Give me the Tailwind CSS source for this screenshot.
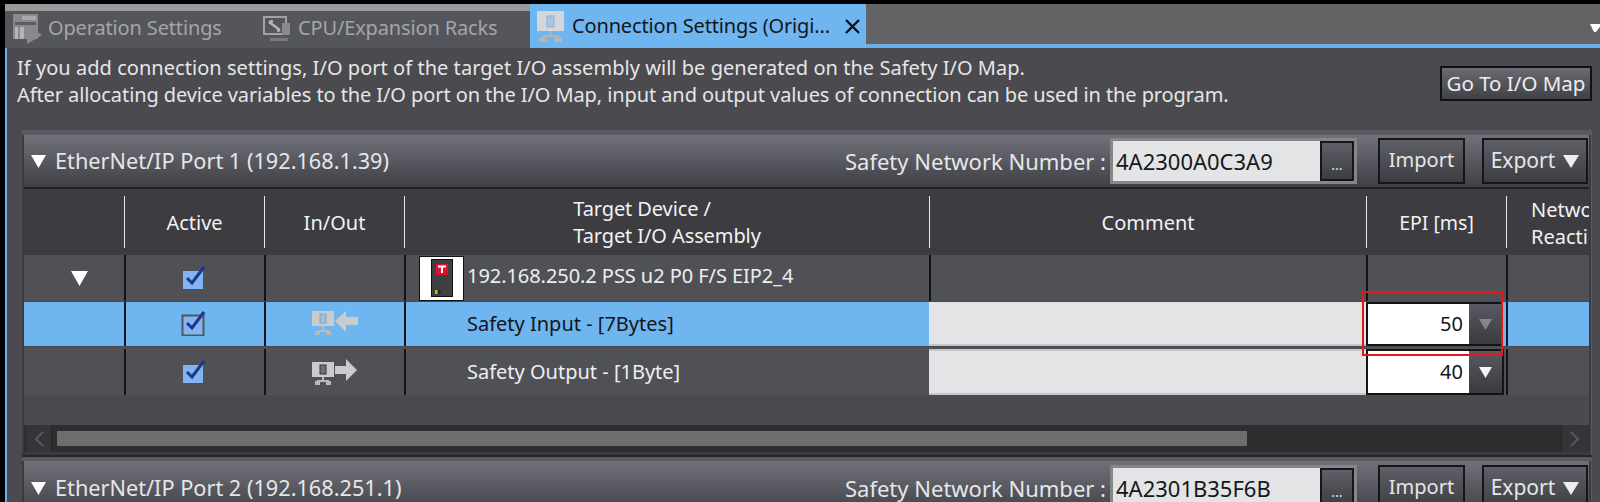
<!DOCTYPE html>
<html>
<head>
<meta charset="utf-8">
<script src="https://cdn.jsdelivr.net/npm/@tailwindcss/browser@4"></script>
</head>
<body class="bg-black">
<div class="relative w-[1600px] h-[502px] overflow-hidden bg-black pl-[5px] pt-[4px] flex font-['Noto_Sans',sans-serif] text-[20px] text-[#e6e6e8]">
  <div class="flex flex-col flex-1 min-w-0">
    <!-- Tabs -->
    <div class="flex h-[44px] shrink-0">
      <div class="w-[525px] flex items-center bg-gradient-to-b from-[#9a9a9c] from-[15%] to-[#55565b] to-[17%] text-[#a4a5a9] tracking-[-0.15px]">
        <svg class="ml-[8px] mt-[5px] w-[29px] h-[30px]" viewBox="0 0 29 30">
          <rect x="0" y="0" width="25" height="25" fill="#8a8a8c"/>
          <rect x="9" y="2" width="14" height="4" fill="#a8a8aa"/>
          <rect x="2" y="8" width="21" height="3" fill="#5c5d61"/>
          <rect x="2" y="13" width="3" height="12" fill="#b5b5b7"/>
          <rect x="7" y="13" width="4" height="12" fill="#b5b5b7"/>
          <path d="M14 11 L29 21 L14 30 Z" fill="#88898b"/>
        </svg>
        <span class="ml-[6px] w-[215px] mt-[3px]">Operation Settings</span>
        <svg class="w-[28px] h-[28px] mt-[6px]" viewBox="0 0 28 28">
          <rect x="1" y="2" width="22" height="17" fill="none" stroke="#a3a3a5" stroke-width="2"/>
          <path d="M6 7 L17 15 M6 7 L10 6 M17 15 L14 16" stroke="#b5b5b7" stroke-width="2.5" fill="none"/>
          <rect x="19" y="8" width="8" height="12" fill="#8a8a8c"/>
          <rect x="7" y="23" width="18" height="3" fill="#77787b"/>
        </svg>
        <span class="ml-[7px] mt-[3px]">CPU/Expansion Racks</span>
      </div>
      <div class="w-[336px] flex items-center bg-[#6fb5f0] text-[#14161a] tracking-[-0.15px]">
        <svg class="ml-[7px] w-[28px] h-[31px]" viewBox="0 0 28 31">
          <rect x="0" y="0" width="27" height="20" fill="#d4d7da"/>
          <rect x="10" y="5" width="7" height="11" fill="#a9c6e0" stroke="#8fb0cf"/>
          <path d="M13.5 20 V25 M6 25 H21 M6 25 V28 M21 25 V28" stroke="#b5b7ba" stroke-width="2" fill="none"/>
          <rect x="2" y="27" width="8" height="4" fill="#b5b7ba"/>
          <rect x="17" y="27" width="8" height="4" fill="#b5b7ba"/>
        </svg>
        <span class="ml-[7px] w-[273px]">Connection Settings (Origi...</span>
        <svg class="w-[15px] h-[15px]" viewBox="0 0 15 15"><path d="M1 1 L14 14 M14 1 L1 14" stroke="#111" stroke-width="2.4"/></svg>
      </div>
      <div class="flex-1 bg-[#636366] border-b-4 border-[#6aaee8] flex items-center justify-end">
        <svg class="w-[10px] h-[8px] mt-[8px]" viewBox="0 0 10 8"><path d="M0 0 H12 L6 8 H4 Z" fill="#fff"/></svg>
      </div>
    </div>
    <!-- Main panel -->
    <div class="flex-1 min-h-0 border-l-2 border-[#6aaee8] bg-[#4a4a4f] pr-[8px] flex flex-col">
      <!-- Intro -->
      <div class="h-[82px] shrink-0 flex justify-between pl-[10px] pt-[7px]">
        <div class="leading-[26.5px]">
          <p class="tracking-[0.04px]">If you add connection settings, I/O port of the target I/O assembly will be generated on the Safety I/O Map.</p>
          <p class="tracking-[-0.09px]">After allocating device variables to the I/O port on the I/O Map, input and output values of connection can be used in the program.</p>
        </div>
        <div class="mt-[11px] w-[152px] h-[35px] border-2 border-[#111114] bg-gradient-to-b from-[#6a6b73] to-[#404146] flex items-center justify-center text-[#eeeef0] text-[20.5px]">Go To I/O Map</div>
      </div>
      <!-- Section 1 -->
      <div class="pl-[15px]">
        <div class="bg-[#5a5b60] pt-[5px] pr-[1px]">
          <div class="border-l-2 border-r-2 border-[#3a3a3f] pb-[3px] bg-[#3a3a3f]">
            <div class="h-[54px] bg-gradient-to-b from-[#70717a] to-[#404147] border-b-2 border-[#202024] flex items-center pl-[7px] pr-[1px] text-[21.7px] whitespace-nowrap">
              <svg class="w-[15px] h-[13px]" viewBox="0 0 15 13"><path d="M0 0 H15 L7.5 13 Z" fill="#fff"/></svg>
              <span class="ml-[9px] flex-1">EtherNet/IP Port 1 (192.168.1.39)</span>
              <span class="mr-[4px] text-[22px]">Safety Network Number :</span>
              <div class="w-[247px] h-[46px] border-[3px] border-[#85868a] bg-[#e3e4e6] flex text-[#16171a] text-[22px]">
                <span class="flex-1 pl-[3px] leading-[40px]">4A2300A0C3A9</span>
                <span class="w-[34px] border-2 border-[#16161a] bg-gradient-to-b from-[#5f6067] to-[#3d3e43] text-[#e6e6e8] text-center text-[14px] leading-[44px]">...</span>
              </div>
              <div class="ml-[21px] w-[87px] h-[46px] pb-[2px] border-2 border-[#16161a] bg-gradient-to-b from-[#5f6067] to-[#3d3e43] flex items-center justify-center text-[20px]">Import</div>
              <div class="ml-[17px] w-[106px] h-[46px] border-2 border-[#16161a] bg-gradient-to-b from-[#5f6067] to-[#3d3e43] flex items-center justify-center gap-[8px] text-[21px]">Export
                <svg class="w-[16px] h-[13px]" viewBox="0 0 16 13"><path d="M0 0 H16 L8 13 Z" fill="#eee"/></svg>
              </div>
            </div>
            <!-- Column headers -->
            <div class="h-[66px] bg-[#3c3c41] grid grid-cols-[100px_140px_140px_525px_437px_140px_83px] items-center text-center text-[#f2f2f4] leading-[27px] overflow-hidden">
              <div></div>
              <div class="h-[52px] border-l border-[#e8e8ea] flex items-center justify-center">Active</div>
              <div class="h-[52px] border-l border-[#e8e8ea] flex items-center justify-center">In/Out</div>
              <div class="h-[52px] border-l border-[#e8e8ea] flex items-center justify-center tracking-[-0.1px]"><div class="text-left">Target Device /<br>Target I/O Assembly</div></div>
              <div class="h-[52px] border-l border-[#e8e8ea] flex items-center justify-center">Comment</div>
              <div class="h-[52px] border-l border-[#e8e8ea] flex items-center justify-center text-[19.5px]">EPI [ms]</div>
              <div class="h-[52px] border-l border-[#e8e8ea] pl-[24px] text-left whitespace-nowrap">Network<br>Reaction</div>
            </div>
            <!-- Row 1 -->
            <div class="h-[46px] bg-[#505156] grid grid-cols-[100px_140px_140px_525px_437px_140px_83px] items-stretch">
              <div class="flex items-center justify-center pl-[10px]">
                <svg class="w-[17px] h-[15px]" viewBox="0 0 17 15"><path d="M0 0 H17 L8.5 15 Z" fill="#fff"/></svg>
              </div>
              <div class="border-l-2 border-[#141416] flex items-center justify-center pr-[4px]">
                <svg class="w-[24px] h-[24px] -mt-[2px]" viewBox="0 0 24 24"><rect x="2" y="6" width="20" height="18" fill="#82b4f0"/><path d="M6 13 L11 18 L23 2" fill="none" stroke="#1f3590" stroke-width="3"/></svg>
              </div>
              <div class="border-l-2 border-[#141416]"></div>
              <div class="border-l-2 border-[#141416] flex items-center pl-[13px]">
                <div class="w-[45px] h-[45px] shrink-0 border border-[#111] bg-white flex items-center justify-center">
                  <svg class="w-[22px] h-[38px]" viewBox="0 0 22 38">
                    <rect x="0.5" y="0.5" width="21" height="37" fill="#3f3f42" stroke="#111"/>
                    <rect x="5" y="5" width="12" height="11" fill="#e0102a"/>
                    <path d="M7 7.5 H15 M11 7.5 V14" stroke="#fff" stroke-width="2"/>
                    <rect x="4" y="31" width="2.5" height="4" fill="#d8b020"/>
                    <rect x="7.5" y="31" width="2" height="4" fill="#222"/>
                  </svg>
                </div>
                <span class="ml-[3px] -mt-[4px] text-[#eeeef0] whitespace-nowrap tracking-[-0.06px]">192.168.250.2 PSS u2 P0 F/S EIP2_4</span>
              </div>
              <div class="border-l-2 border-[#141416]"></div>
              <div class="border-l-2 border-[#141416]"></div>
              <div class="border-l-2 border-[#141416]"></div>
            </div>
            <!-- Row 2 -->
            <div class="h-[46px] bg-[#6fb5f0] border-y border-[#47484c] grid grid-cols-[100px_140px_140px_525px_437px_140px_83px] items-stretch">
              <div></div>
              <div class="border-l-2 border-[#141416] flex items-center justify-center pr-[4px]">
                <svg class="w-[26px] h-[26px] -mt-[2px]" viewBox="0 0 26 26"><rect x="2.5" y="5.5" width="21" height="20" fill="#82b4f0" stroke="#55565a" stroke-width="2"/><path d="M7 13 L12 18 L24 2" fill="none" stroke="#1f3590" stroke-width="3"/></svg>
              </div>
              <div class="border-l-2 border-[#141416] flex items-center justify-center">
                <svg class="w-[46px] h-[26px]" viewBox="0 0 46 26">
                  <rect x="0" y="0" width="22" height="15" fill="#c9cbcd"/>
                  <rect x="8" y="3" width="6" height="9" fill="#a3bfd8" stroke="#7ea3c4"/>
                  <path d="M11 15 V20 M5 20 H17" stroke="#b7b9bb" stroke-width="2"/>
                  <rect x="3" y="20" width="5" height="4" fill="#b7b9bb"/>
                  <rect x="14" y="20" width="5" height="4" fill="#b7b9bb"/>
                  <path d="M23 10 L34 0 V6 H46 V14 H34 V21 Z" fill="#c9cbcd"/>
                </svg>
              </div>
              <div class="border-l-2 border-[#141416] flex items-center pl-[61px] text-[#14161a]">Safety Input - [7Bytes]</div>
              <div class="bg-[#e3e4e6] border-b-2 border-[#c5c6c8]"></div>
              <div class="flex pr-[4px]">
                <div class="flex-1 flex border-y-2 border-l-2 border-[#141416]">
                  <div class="flex-1 bg-white flex items-center justify-end pr-[6px] text-[#14161a]">50</div>
                  <div class="w-[33px] bg-gradient-to-b from-[#5a5b62] to-[#3a3b40] flex items-center justify-center"><svg class="w-[13px] h-[11px]" viewBox="0 0 13 11"><path d="M0 0 H13 L6.5 11 Z" fill="#85868b"/></svg></div>
                </div>
              </div>
              <div class="border-l-2 border-[#141416]"></div>
            </div>
            <!-- Row 3 -->
            <div class="h-[48px] bg-[#505156] pt-[2px] grid grid-cols-[100px_140px_140px_525px_437px_140px_83px] items-stretch">
              <div></div>
              <div class="border-l-2 border-[#141416] flex items-center justify-center pr-[4px]">
                <svg class="w-[24px] h-[24px] -mt-[2px]" viewBox="0 0 24 24"><rect x="2" y="6" width="20" height="18" fill="#82b4f0"/><path d="M6 13 L11 18 L23 2" fill="none" stroke="#1f3590" stroke-width="3"/></svg>
              </div>
              <div class="border-l-2 border-[#141416] flex items-center justify-center">
                <svg class="w-[46px] h-[26px]" viewBox="0 0 46 26">
                  <rect x="0" y="3" width="22" height="15" fill="#c9cbcd"/>
                  <rect x="8" y="6" width="6" height="9" fill="#707176" stroke="#333"/>
                  <path d="M11 18 V22 M5 22 H17" stroke="#b7b9bb" stroke-width="2"/>
                  <rect x="3" y="22" width="5" height="4" fill="#b7b9bb"/>
                  <rect x="14" y="22" width="5" height="4" fill="#b7b9bb"/>
                  <path d="M23 7 H34 V0 L45 11 L34 22 V15 H23 Z" fill="#c9cbcd"/>
                </svg>
              </div>
              <div class="border-l-2 border-[#141416] flex items-center pl-[61px] text-[#eeeef0]">Safety Output - [1Byte]</div>
              <div class="bg-[#e3e4e6] border-y-2 border-[#c5c6c8]"></div>
              <div class="flex pr-[2px]">
                <div class="flex-1 flex border-y-2 border-x-2 border-[#141416]">
                  <div class="flex-1 bg-white flex items-center justify-end pr-[6px] text-[#14161a]">40</div>
                  <div class="w-[33px] bg-gradient-to-b from-[#5a5b62] to-[#3a3b40] flex items-center justify-center"><svg class="w-[13px] h-[11px]" viewBox="0 0 13 11"><path d="M0 0 H13 L6.5 11 Z" fill="#f4f4f6"/></svg></div>
                </div>
              </div>
              <div class="border-l-2 border-[#141416]"></div>
            </div>
            <!-- Empty + scrollbar -->
            <div class="h-[30px] bg-[#4a4a4f]"></div>
            <div class="h-[27px] bg-[#2e2e31] flex items-stretch pl-[2px] pr-[1px]">
              <div class="w-[26px] bg-[#353538] border-r border-[#26262a] flex items-center justify-center">
                <svg class="w-[10px] h-[16px]" viewBox="0 0 10 16"><path d="M9 1 L2 8 L9 15" fill="none" stroke="#57585c" stroke-width="2"/></svg>
              </div>
              <div class="flex-1 flex items-center pl-[5px]"><div class="w-[1190px] h-[15px] bg-[#6e6e70]"></div></div>
              <div class="w-[27px] bg-[#353538] border-l border-[#26262a] flex items-center justify-center">
                <svg class="w-[10px] h-[16px]" viewBox="0 0 10 16"><path d="M1 1 L8 8 L1 15" fill="none" stroke="#57585c" stroke-width="2"/></svg>
              </div>
            </div>
          </div>
        </div>
        <!-- Section 2 -->
        <div class="bg-[#5a5b60] pt-[4px] border-t-2 border-[#26262a] pr-[1px]">
          <div class="border-l-2 border-r-2 border-[#3a3a3f]">
            <div class="h-[54px] bg-gradient-to-b from-[#70717a] to-[#404147] flex items-center pl-[7px] pr-[1px] text-[21.7px] whitespace-nowrap">
              <svg class="w-[15px] h-[13px]" viewBox="0 0 15 13"><path d="M0 0 H15 L7.5 13 Z" fill="#fff"/></svg>
              <span class="ml-[9px] flex-1">EtherNet/IP Port 2 (192.168.251.1)</span>
              <span class="mr-[4px] text-[22px]">Safety Network Number :</span>
              <div class="w-[247px] h-[46px] border-[3px] border-[#85868a] bg-[#e3e4e6] flex text-[#16171a] text-[22px]">
                <span class="flex-1 pl-[3px] leading-[40px]">4A2301B35F6B</span>
                <span class="w-[34px] border-2 border-[#16161a] bg-gradient-to-b from-[#5f6067] to-[#3d3e43] text-[#e6e6e8] text-center text-[14px] leading-[44px]">...</span>
              </div>
              <div class="ml-[21px] w-[87px] h-[46px] pb-[2px] border-2 border-[#16161a] bg-gradient-to-b from-[#5f6067] to-[#3d3e43] flex items-center justify-center text-[20px]">Import</div>
              <div class="ml-[17px] w-[106px] h-[46px] border-2 border-[#16161a] bg-gradient-to-b from-[#5f6067] to-[#3d3e43] flex items-center justify-center gap-[8px] text-[21px]">Export
                <svg class="w-[16px] h-[13px]" viewBox="0 0 16 13"><path d="M0 0 H16 L8 13 Z" fill="#eee"/></svg>
              </div>
            </div>
          </div>
        </div>
      </div>
    </div>
  </div>
  <!-- Red annotation box -->
  <div class="absolute left-[1362px] top-[291px] w-[141px] h-[65px] border-2 border-[#e8151b]"></div>
</div>
</body>
</html>
